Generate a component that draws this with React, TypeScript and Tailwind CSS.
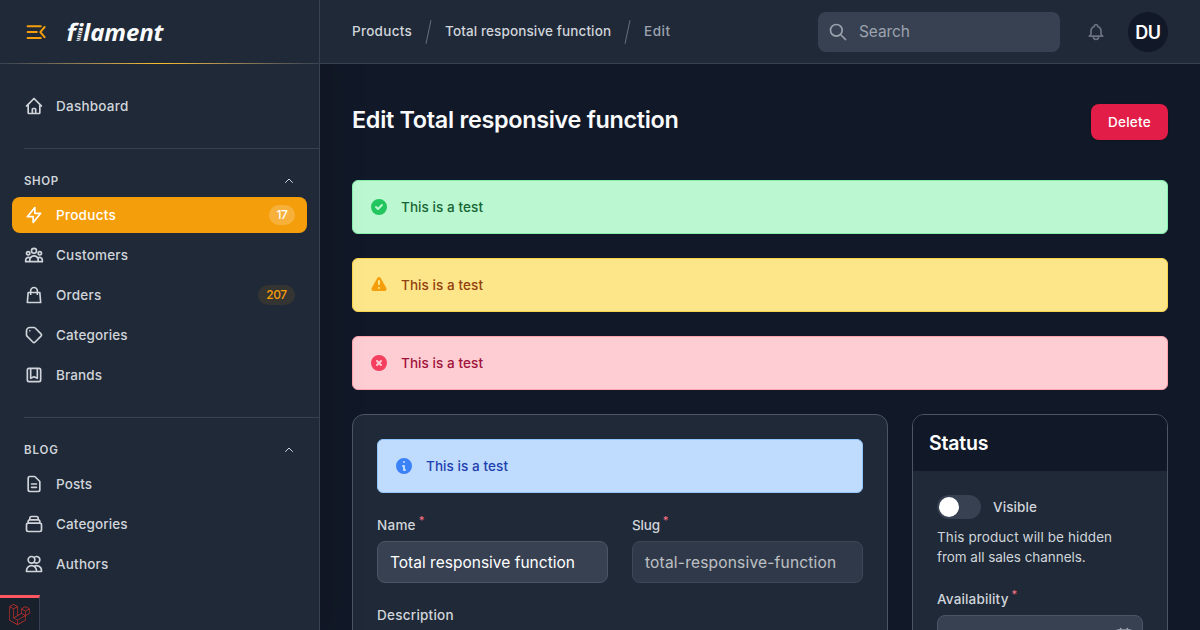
import React from "react";
import {
  HiCheckCircle,
  HiExclamation,
  HiInformationCircle,
  HiOutlineBell,
  HiOutlineBookmarkAlt,
  HiOutlineCalendar,
  HiOutlineChevronUp,
  HiOutlineCollection,
  HiOutlineDocumentText,
  HiOutlineHome,
  HiOutlineLightningBolt,
  HiOutlineSearch,
  HiOutlineShoppingBag,
  HiOutlineTag,
  HiOutlineUserGroup,
  HiOutlineUsers,
  HiXCircle,
} from "react-icons/hi";
import { SiLaravel } from "react-icons/si";

type Icon = React.ComponentType<{ className?: string }>;

function NavItem({ icon: I, label, badge, active, track = "tracking-[0.22px]" }: { icon: Icon; label: string; badge?: string; active?: boolean; track?: string }) {
  return (
    <a className={`flex h-9 items-center gap-3 rounded-lg px-3 text-[13.5px] font-medium leading-5 ${active ? "bg-[#f59e0b] text-white" : "text-[#d1d5db]"}`}>
      <I className="h-5 w-5 shrink-0" />
      <span className={`flex-1 ${track}`}>{label}</span>
      {badge && (
        <span className={`flex h-5 items-center justify-center rounded-full px-2 text-xs font-medium tracking-[-0.4px] ${active ? "w-[26px] bg-white/20 text-white" : "w-[37px] bg-[#f59e0b]/10 text-[#f59e0b]"}`}>
          {badge}
        </span>
      )}
    </a>
  );
}

function Group({ title, children, track }: { title: string; children: React.ReactNode; track: string }) {
  return (
    <section className="mt-6">
      <div className="-mr-3 ml-3 h-px bg-[#374151]" />
      <div className="mb-2 mt-6 flex h-4 items-center justify-between pl-3 pr-3">
        <h2 className={`text-[11.5px] font-semibold leading-4 text-[#d1d5db] ${track}`}>{title}</h2>
        <HiOutlineChevronUp className="h-3 w-3 text-[#d1d5db]" />
      </div>
      <div className="flex flex-col gap-1">{children}</div>
    </section>
  );
}

function Alert({ icon: I, box, iconClass }: { icon: Icon; box: string; iconClass: string }) {
  return (
    <div className={`flex h-[54px] items-center gap-3 rounded-md border px-4 ${box}`}>
      <I className={`h-5 w-5 ${iconClass}`} />
      <span className="text-[13.5px] font-medium leading-5 tracking-[0.08px]">This is a test</span>
    </div>
  );
}

function Label({ children, required }: { children: React.ReactNode; required?: boolean }) {
  return (
    <div className="flex h-4 items-center text-[13.5px] font-medium tracking-[0.25px] text-[#d1d5db]">
      {children}
      {required && <sup className="-top-[5px] ml-[3px] text-[11px] leading-none text-[#fb7185]">*</sup>}
    </div>
  );
}

function Slash() {
  return <span className="h-6 w-px rotate-12 bg-[#6b7280]" />;
}

export default function App() {
  return (
    <div className="relative flex h-[630px] w-[1200px] overflow-hidden bg-[#111827] font-['Inter','DM_Sans',sans-serif] antialiased">
      <aside className="z-10 flex w-80 shrink-0 flex-col border-r border-[#374151] bg-[#1f2937] shadow-2xl">
        <div className="flex h-[63px] items-center pl-6">
          <svg viewBox="0 0 24 24" className="h-6 w-6 fill-none stroke-[#f59e0b]" strokeWidth="2" strokeLinecap="round" strokeLinejoin="round">
            <path d="M3.6 6.2h13.2M3.6 12.1h9.2M3.6 18.1h13.2M20.6 7L16.3 12.1l4.3 5.1" />
          </svg>
          <div className="relative ml-[19px] flex font-['Noto_Sans',sans-serif] text-[24px] font-bold leading-8 text-[#f9fafb]">
            <span className="inline-block w-[9px] -skew-x-12">f</span>
            <span className="italic tracking-[-0.1px]">ilament</span>
            <svg viewBox="0 0 8 14" className="absolute left-[9px] top-[13px] h-[14px] w-2 fill-none stroke-[#1f2937]" strokeWidth="0.9">
              <path d="M0 1.2l6 1.2M0 3.5l6 1.2M0 5.8l6 1.2M0 8.1l6 1.2M0 10.4l6 1.2" />
            </svg>
          </div>
        </div>
        <div className="h-px w-full shrink-0 bg-linear-to-r from-[#374151] via-[#fbbf24] to-[#374151]" />
        <nav className="px-3 pt-6">
          <NavItem icon={HiOutlineHome} label="Dashboard" track="tracking-[0.24px]" />
          <Group title="SHOP" track="tracking-[0.6px]">
            <NavItem icon={HiOutlineLightningBolt} label="Products" badge="17" active track="tracking-[0.28px]" />
            <NavItem icon={HiOutlineUserGroup} label="Customers" />
            <NavItem icon={HiOutlineShoppingBag} label="Orders" badge="207" />
            <NavItem icon={HiOutlineTag} label="Categories" track="tracking-[0.12px]" />
            <NavItem icon={HiOutlineBookmarkAlt} label="Brands" track="tracking-[0.12px]" />
          </Group>
          <Group title="BLOG" track="tracking-[0.85px]">
            <NavItem icon={HiOutlineDocumentText} label="Posts" track="tracking-[0.08px]" />
            <NavItem icon={HiOutlineCollection} label="Categories" track="tracking-[0.12px]" />
            <NavItem icon={HiOutlineUsers} label="Authors" track="tracking-[0.2px]" />
          </Group>
        </nav>
      </aside>

      <div className="flex min-w-0 flex-1 flex-col">
        <header className="z-20 flex h-16 shrink-0 items-center border-b border-[#374151] bg-[#1f2937] px-8">
          <div className="flex flex-1 items-center text-[13.5px] font-medium leading-5 text-[#d1d5db]">
            <span className="w-[60px] pb-0.5 tracking-[0.28px]">Products</span>
            <span className="flex w-[33px] justify-center"><Slash /></span>
            <span className="w-[166px] whitespace-nowrap pb-0.5 tracking-[0.12px]">Total responsive function</span>
            <span className="flex w-[33px] justify-center"><Slash /></span>
            <span className="pb-0.5 tracking-[0.55px] text-[#9ca3af]">Edit</span>
          </div>
          <div className="flex h-10 w-[242px] items-center gap-[11px] rounded-lg bg-[#374151] pl-[10px] text-[#9ca3af]">
            <HiOutlineSearch className="h-5 w-5" />
            <span className="pt-px text-[15.5px] leading-6 tracking-[-0.1px]">Search</span>
          </div>
          <HiOutlineBell className="ml-[26px] h-5 w-5 text-[#6b7280]" />
          <div className="ml-[22px] flex h-10 w-10 items-center justify-center rounded-full bg-[#111827] pt-px text-[18px] font-semibold tracking-[-0.4px] text-white">DU</div>
        </header>

        <main className="px-8 pt-10">
          <div className="flex items-start justify-between">
            <h1 className="text-[23.4px] font-semibold leading-8 tracking-[-0.3px] text-[#f9fafb]">Edit Total responsive function</h1>
            <button className="h-9 w-[77px] rounded-lg bg-[#e11d48] text-[13.5px] font-medium tracking-[0.28px] text-white shadow">Delete</button>
          </div>
          <div className="mt-10 flex flex-col gap-6">
            <Alert icon={HiCheckCircle} box="border-[#86efac] bg-[#bbf7d0] text-[#166534]" iconClass="text-[#22c55e]" />
            <Alert icon={HiExclamation} box="border-[#fcd34d] bg-[#fde68a] text-[#92400e]" iconClass="text-[#f59e0b]" />
            <Alert icon={HiXCircle} box="border-[#fda4af] bg-[#fecdd3] text-[#9f1239]" iconClass="text-[#f43f5e]" />
          </div>
          <div className="mt-6 flex items-start gap-6">
            <section className="h-[400px] w-[536px] rounded-xl border border-[#4b5563] bg-[#1f2937] p-6">
              <Alert icon={HiInformationCircle} box="border-[#93c5fd] bg-[#bfdbfe] text-[#1e40af]" iconClass="text-[#3b82f6]" />
              <div className="mt-6 grid grid-cols-2 gap-6">
                <div className="flex flex-col gap-2">
                  <Label required>Name</Label>
                  <div className="flex h-[42px] items-center whitespace-nowrap rounded-lg border border-[#4b5563] bg-[#374151] px-3 pt-0.5 text-[15.5px] tracking-[0.01px] text-white">Total responsive function</div>
                </div>
                <div className="flex flex-col gap-2">
                  <Label required><span className="tracking-[-0.2px]">Slug</span></Label>
                  <div className="flex h-[42px] items-center whitespace-nowrap rounded-lg border border-[#4b5563] bg-[#374151] px-3 pt-0.5 text-[15.5px] tracking-[0.2px] text-white opacity-70">total-responsive-function</div>
                </div>
              </div>
              <div className="mt-6"><Label>Description</Label></div>
            </section>
            <section className="h-[400px] w-64 overflow-hidden rounded-xl border border-[#4b5563] bg-[#1f2937]">
              <div className="flex h-14 items-center bg-[#111827] px-4 pt-0.5 text-[19.5px] font-semibold tracking-[-0.2px] text-white">Status</div>
              <div className="p-6">
                <div className="flex items-center gap-3">
                  <div className="flex h-6 w-11 items-center rounded-full bg-[#374151] px-0.5">
                    <div className="h-5 w-5 rounded-full bg-white" />
                  </div>
                  <span className="text-[13.5px] font-medium leading-5 tracking-[0.12px] text-[#d1d5db]">Visible</span>
                </div>
                <p className="mt-2 whitespace-nowrap text-[13.5px] leading-5 text-[#d1d5db]">
                  <span className="block tracking-[0.1px]">This product will be hidden</span>
                  <span className="block tracking-[-0.04px]">from all sales channels.</span>
                </p>
                <div className="mt-6 flex flex-col gap-2">
                  <Label required><span className="tracking-[0.16px]">Availability</span></Label>
                  <div className="flex h-[42px] items-center justify-end rounded-lg border border-[#4b5563] bg-[#374151] px-2">
                    <HiOutlineCalendar className="h-5 w-5 text-[#9ca3af]" />
                  </div>
                </div>
              </div>
            </section>
          </div>
        </main>
      </div>

      <div className="absolute bottom-0 left-0 z-30 flex h-[35px] w-10 items-center justify-center border-r border-t-[3px] border-r-[#374151] border-t-[#ff5661] bg-[#18202b] pt-px">
        <SiLaravel className="h-[21px] w-[21px] text-[#c8302a]" />
      </div>
    </div>
  );
}
